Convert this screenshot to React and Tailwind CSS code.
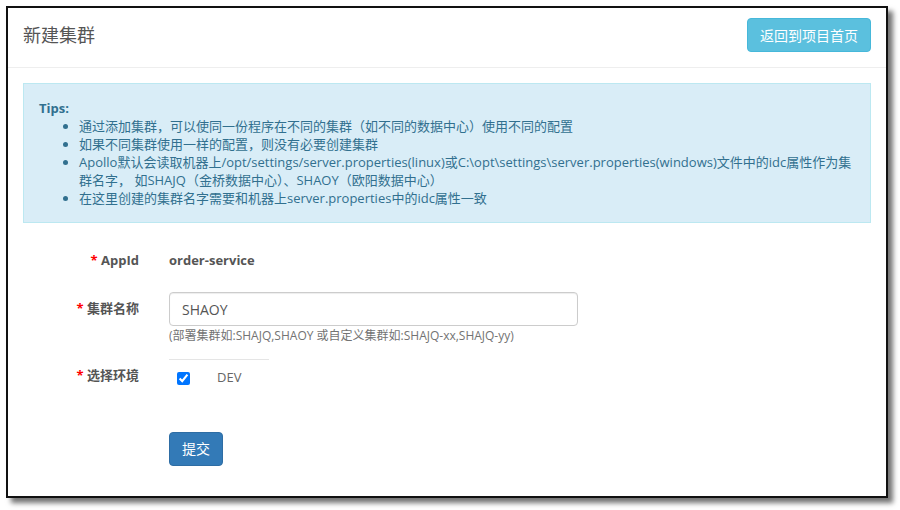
export default function App() {
  const font = { fontFamily: '"Open Sans", "Noto Sans CJK SC", sans-serif' }

  return (
    <div className="w-[900px] h-[510px] bg-white overflow-hidden" style={font}>
      <div className="ml-[6px] mt-[6px] w-[882px] h-[492px] border-2 border-[#111] bg-white shadow-[5px_5px_5px_rgba(0,0,0,0.55)] flex flex-col">
        {/* header */}
        <div className="flex items-start justify-between px-[15px] pt-[10px] pb-[15px] border-b border-[#eeeeee]">
          <h1 className="text-[18px] leading-[34px] text-[#555555] font-normal">新建集群</h1>
          <button className="h-[34px] px-[12px] rounded-[4px] bg-[#5bc0de] border border-[#46b8da] text-white text-[14px]">
            返回到项目首页
          </button>
        </div>

        {/* tips */}
        <div className="mx-[15px] mt-[15px] border border-[#bce8f1] bg-[#d9edf7] text-[#31708f] text-[13px] leading-[18px] px-[15px] py-[15px]">
          <p className="font-bold">Tips:</p>
          <ul className="list-disc pl-[40px]">
            <li>通过添加集群，可以使同一份程序在不同的集群（如不同的数据中心）使用不同的配置</li>
            <li>如果不同集群使用一样的配置，则没有必要创建集群</li>
            <li>
              <span className="whitespace-nowrap">
                Apollo默认会读取机器上/opt/settings/server.properties(linux)或C:\opt\settings\server.properties(windows)文件中的idc属性作为集
              </span>
              <br />
              群名字， 如SHAJQ（金桥数据中心）、SHAOY（欧阳数据中心）
            </li>
            <li>在这里创建的集群名字需要和机器上server.properties中的idc属性一致</li>
          </ul>
        </div>

        {/* form */}
        <div className="text-[13px] leading-[18px] text-[#555555]">
          <div className="flex mt-[28px]">
            <label className="w-[131px] text-right font-bold">
              <span className="text-[#ff0000]">*</span> AppId
            </label>
            <div className="ml-[30px] font-bold">order-service</div>
          </div>

          <div className="flex mt-[23px]">
            <label className="w-[131px] text-right font-bold pt-[7px]">
              <span className="text-[#ff0000]">*</span> 集群名称
            </label>
            <div className="ml-[30px]">
              <input
                type="text"
                defaultValue="SHAOY"
                className="w-[409px] h-[34px] px-[12px] border border-[#cccccc] rounded-[4px] text-[14px] text-[#555555] outline-none shadow-[inset_0_1px_1px_rgba(0,0,0,0.075)]"
                style={font}
              />
              <p className="mt-[2px] text-[12px] leading-[16px] text-[#737373]">
                (部署集群如:SHAJQ,SHAOY 或自定义集群如:SHAJQ-xx,SHAJQ-yy)
              </p>
              <div className="mt-[15px] w-[100px] border-t border-[#e5e5e5]" />
            </div>
          </div>

          <div className="flex mt-[6px]">
            <label className="w-[131px] text-right font-bold">
              <span className="text-[#ff0000]">*</span> 选择环境
            </label>
            <div className="ml-[30px] flex items-start">
              <input
                type="checkbox"
                defaultChecked
                className="ml-[8px] mt-[6px] w-[13px] h-[13px] accent-[#0075ff]"
              />
              <span className="ml-[27px] mt-[2px] text-[#666666]">DEV</span>
            </div>
          </div>

          <div className="flex mt-[46px]">
            <div className="w-[131px]" />
            <button className="ml-[30px] h-[34px] px-[12px] rounded-[4px] bg-[#337ab7] border border-[#2e6da4] text-white text-[14px]">
              提交
            </button>
          </div>
        </div>
      </div>
    </div>
  )
}
